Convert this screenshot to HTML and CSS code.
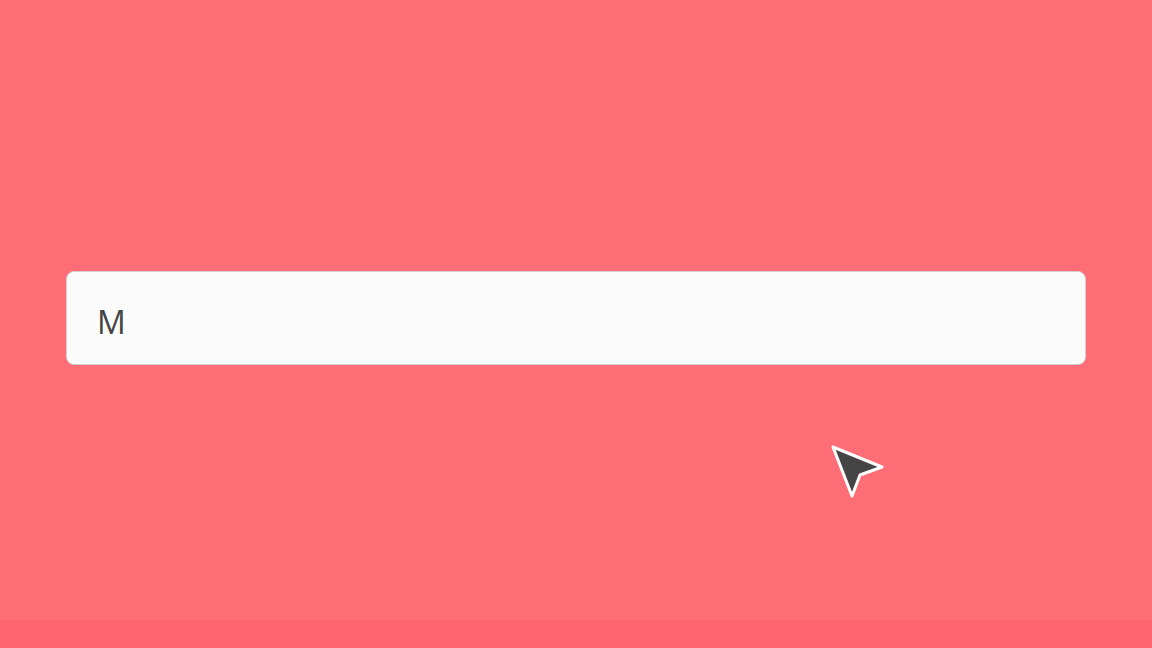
FILE: index.html
```html
<!DOCTYPE html>
<html>
<head>
<meta charset="utf-8">
<link rel="stylesheet" href="styles.css">
</head>
<body>
<main class="stage">
  <div class="field"><span class="field-text">M</span></div>
  <svg class="cursor" width="60" height="60" viewBox="0 0 60 60">
    <path d="M4 3 L53 23 L31 31 L23 52 Z" fill="#454545" stroke="#ffffff" stroke-width="3" stroke-linejoin="round"/>
  </svg>
</main>
<footer class="band"></footer>
</body>
</html>
```
FILE: styles.css
```css
html, body {
  margin: 0;
  padding: 0;
}
body {
  width: 1152px;
  height: 648px;
  overflow: hidden;
  background: #ff6e76;
  font-family: "Open Sans", "Liberation Sans", sans-serif;
  display: flex;
  flex-direction: column;
}
.stage {
  position: relative;
  height: 620px;
  box-sizing: border-box;
  padding: 271px 66px 0 66px;
}
.field {
  height: 94px;
  box-sizing: border-box;
  background: #fbfbfb;
  border: 1px solid #d6d0d0;
  border-radius: 8px;
  display: flex;
  align-items: center;
  padding-left: 30px;
  padding-top: 7px;
}
.field-text {
  font-size: 32px;
  line-height: 1;
  color: #454545;
}
.cursor {
  position: absolute;
  left: 829px;
  top: 444px;
}
.band {
  height: 28px;
  background: #ff6670;
}
```
